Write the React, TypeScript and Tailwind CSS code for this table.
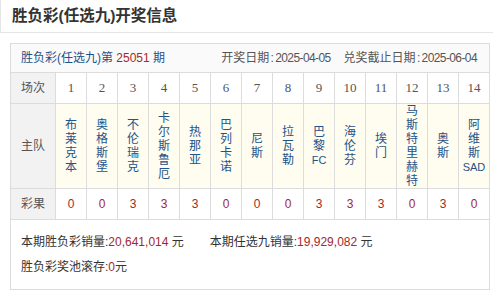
import React from "react";

const cjk = "font-['Liberation_Sans','Noto_Sans_CJK_SC',sans-serif]";

export default function App() {
  const matches = [
    { no: 1, team: ["布", "莱", "克", "本"], result: "0" },
    { no: 2, team: ["奥", "格", "斯", "堡"], result: "0" },
    { no: 3, team: ["不", "伦", "瑞", "克"], result: "3" },
    { no: 4, team: ["卡", "尔", "斯", "鲁", "厄"], result: "3" },
    { no: 5, team: ["热", "那", "亚"], result: "3" },
    { no: 6, team: ["巴", "列", "卡", "诺"], result: "0" },
    { no: 7, team: ["尼", "斯"], result: "0" },
    { no: 8, team: ["拉", "瓦", "勒"], result: "0" },
    { no: 9, team: ["巴", "黎", "FC"], result: "3" },
    { no: 10, team: ["海", "伦", "芬"], result: "3" },
    { no: 11, team: ["埃", "门"], result: "3" },
    { no: 12, team: ["马", "斯", "特", "里", "赫", "特"], result: "0" },
    { no: 13, team: ["奥", "斯"], result: "3" },
    { no: 14, team: ["阿", "维", "斯", "SAD"], result: "0" },
  ];

  return (
    <div className={`w-[493px] h-[291px] bg-white text-[#333] ${cjk}`}>
      {/* 标题 */}
      <div className="h-[33px] border-l border-b border-[#e5e5e5] pl-[11px] flex items-center text-[15.5px] font-bold text-[#333]">
        胜负彩(任选九)开奖信息
      </div>

      <div className="mt-[10px] ml-[10px] w-[480px] border border-[#dcdcdc]">
        {/* 期号 / 日期 */}
        <div className="h-[29px] border-b border-[#dcdcdc] bg-[#fafafa] flex items-center justify-between pl-[10px] pr-[12px] text-[12px]">
          <div className="text-[#1f5289]">
            胜负彩(任选九)第 <span className="text-[#a3282c]">25051</span> 期
          </div>
          <div className="text-[#555] flex gap-[13px]">
            <span>
              开奖日期<span className="inline-block w-[6px] text-center">:</span>
              <span className="tracking-[-0.6px]">2025-04-05</span>
            </span>
            <span>
              兑奖截止日期<span className="inline-block w-[6px] text-center">:</span>
              <span className="tracking-[-0.6px]">2025-06-04</span>
            </span>
          </div>
        </div>

        {/* 场次表 */}
        <div className="grid grid-cols-[44px_repeat(14,30px)] grid-rows-[30px_84px_30px] gap-px bg-[#dcdcdc] border-b border-[#dcdcdc] text-[12px]">
          <div className="bg-[#f2f2f2] flex items-center justify-center text-[#555]">场次</div>
          {matches.map((m) => (
            <div key={`n${m.no}`} className="bg-white flex items-center justify-center text-[#555] font-['Liberation_Serif',serif] text-[13px]">
              {m.no}
            </div>
          ))}

          <div className="bg-[#f2f2f2] flex items-center justify-center text-[#555]">主队</div>
          {matches.map((m) => (
            <div key={`t${m.no}`} className="bg-[#fffcf0] flex flex-col items-center justify-center text-[#23538a] leading-[14px]">
              {m.team.map((c, i) => (
                <span key={i} className={c.length > 1 ? "text-[11px]" : ""}>{c}</span>
              ))}
            </div>
          ))}

          <div className="bg-[#f2f2f2] flex items-center justify-center text-[#555]">彩果</div>
          {matches.map((m) => (
            <div key={`r${m.no}`} className="bg-white flex items-center justify-center text-[#a3282c] font-['Liberation_Sans',sans-serif] text-[12px]">
              {m.result}
            </div>
          ))}
        </div>

        {/* 销量 */}
        <div className="h-[69px] pt-[10px] pl-[10px] text-[12px] leading-[25px] text-[#333]">
          <div className="flex">
            <span>
              本期胜负彩销量:<span className="text-[#a3282c]">20,641,014</span> 元
            </span>
            <span className="ml-[26px]">
              本期任选九销量:<span className="text-[#a3282c]">19,929,082</span> 元
            </span>
          </div>
          <div>
            胜负彩奖池滚存:<span className="text-[#a3282c]">0</span>元
          </div>
        </div>
      </div>
    </div>
  );
}
